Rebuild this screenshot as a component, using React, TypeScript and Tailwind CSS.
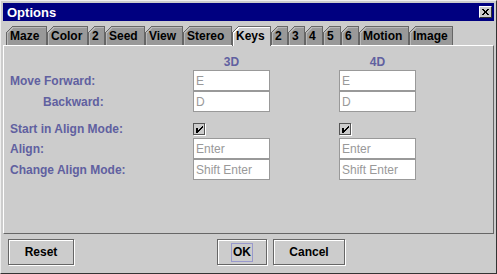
import React from 'react';

const tabs = [
  { label: 'Maze', w: 41 },
  { label: 'Color', w: 41 },
  { label: '2', w: 17 },
  { label: 'Seed', w: 40 },
  { label: 'View', w: 38 },
  { label: 'Stereo', w: 49 },
  { label: 'Keys', w: 39, selected: true },
  { label: '2', w: 17 },
  { label: '3', w: 17 },
  { label: '4', w: 18 },
  { label: '5', w: 18 },
  { label: '6', w: 18 },
  { label: 'Motion', w: 50 },
  { label: 'Image', w: 44 },
];

function Tab({ label, w, selected }: { label: string; w: number; selected?: boolean }) {
  const h = selected ? 20 : 19;
  return (
    <div className={`relative shrink-0 ${selected ? 'h-[20px] -mb-[1px] z-10' : 'h-[19px]'}`} style={{ width: w }}>
      <svg width={w} height={h} className="absolute left-0 top-0" shapeRendering="crispEdges">
        <path
          d={`M0.5,${h} L0.5,6.5 L6.5,0.5 L${w - 0.5},0.5 L${w - 0.5},${h}`}
          fill={selected ? '#cccccc' : '#999999'}
          stroke="#666666"
        />
        <path d={`M1.5,${h} L1.5,7 L7,1.5 L${w - 1.5},1.5`} fill="none" stroke={selected ? '#ffffff' : '#b8b8b8'} />
      </svg>
      <span className="relative block pl-[4px] pt-[2px] text-[12px] leading-[16px] font-bold text-black">{label}</span>
    </div>
  );
}

function Field({ value }: { value: string }) {
  return (
    <div className="w-[77px] h-[21px] bg-white border border-[#999999] flex items-center pl-[2px] text-[12px] text-[#999999]">
      {value}
    </div>
  );
}

function Check() {
  return (
    <div className="w-[12px] h-[12px] border border-[#555555] bg-[#cccccc] shadow-[1px_1px_0_#ffffff]">
      <svg width="11" height="11" viewBox="1 1 11 11" shapeRendering="crispEdges">
        <rect x="3" y="5" width="2" height="5" fill="#000" />
        {[0, 1, 2, 3, 4].map((i) => (
          <rect key={i} x={9 - i} y={3 + i} width="1" height="2" fill="#000" />
        ))}
      </svg>
    </div>
  );
}

function Row({ label, indent, a, b }: { label: string; indent?: boolean; a: React.ReactNode; b: React.ReactNode }) {
  return (
    <div className="flex items-center">
      <div className={`w-[183px] text-[12px] leading-[14px] font-bold text-[#6060a0] ${indent ? 'pl-[33px]' : ''}`}>{label}</div>
      <div className="w-[77px]">{a}</div>
      <div className="w-[69px]" />
      <div className="w-[77px]">{b}</div>
    </div>
  );
}

function Button({ label, w, focus }: { label: string; w: number; focus?: boolean }) {
  return (
    <div
      className="h-[26px] border border-[#666666] shadow-[1px_1px_0_#ffffff,inset_1px_1px_0_#ffffff] flex items-center justify-center text-[12px] font-bold text-black"
      style={{ width: w }}
    >
      <span className={focus ? 'border border-[#9999cc] px-[1px] leading-[17px]' : ''}>{label}</span>
    </div>
  );
}

export default function App() {
  return (
    <div
      className="w-[497px] h-[274px] bg-[#cccccc] border border-t-[#eeeeee] border-l-[#eeeeee] border-r-[#333333] border-b-[#333333] p-[2px] flex flex-col"
      style={{ fontFamily: '"Liberation Sans", Arial, sans-serif' }}
    >
      <div className="h-[18px] bg-[#000080] flex items-center justify-between pl-[4px] pr-[2px]">
        <span className="text-[13px] font-bold text-white leading-none">Options</span>
        <div className="w-[13px] h-[12px] bg-[#cccccc] border border-t-white border-l-white border-r-[#333333] border-b-[#333333] flex items-center justify-center">
          <svg width="7" height="6" viewBox="0 0 7 6" shapeRendering="crispEdges">
            <path d="M0,0 L7,6 M7,0 L0,6" stroke="#000" strokeWidth="1.3" />
          </svg>
        </div>
      </div>

      <div className="mt-[5px] flex items-end pl-[3px]">
        {tabs.map((t, i) => (
          <Tab key={i} label={t.label} w={t.w} selected={t.selected} />
        ))}
      </div>

      <div className="h-[189px] border border-t-white border-l-white border-r-[#666666] border-b-[#666666] pl-[6px] pt-[9px] flex flex-col">
        <div className="flex h-[14px] items-center text-[12px] font-bold text-[#6060a0]">
          <div className="w-[183px]" />
          <div className="w-[77px] text-center">3D</div>
          <div className="w-[69px]" />
          <div className="w-[77px] text-center">4D</div>
        </div>
        <div className="mt-[1px]">
          <Row label="Move Forward:" a={<Field value="E" />} b={<Field value="E" />} />
          <Row label="Backward:" indent a={<Field value="D" />} b={<Field value="D" />} />
        </div>
        <div className="mt-[10px]">
          <Row label="Start in Align Mode:" a={<Check />} b={<Check />} />
        </div>
        <div className="mt-[2px]">
          <Row label="Align:" a={<Field value="Enter" />} b={<Field value="Enter" />} />
          <Row label="Change Align Mode:" a={<Field value="Shift Enter" />} b={<Field value="Shift Enter" />} />
        </div>
      </div>

      <div className="flex items-start pt-[5px] pl-[5px]">
        <Button label="Reset" w={66} />
        <div className="ml-[143px]">
          <Button label="OK" w={50} focus />
        </div>
        <div className="ml-[6px]">
          <Button label="Cancel" w={72} />
        </div>
      </div>
    </div>
  );
}
